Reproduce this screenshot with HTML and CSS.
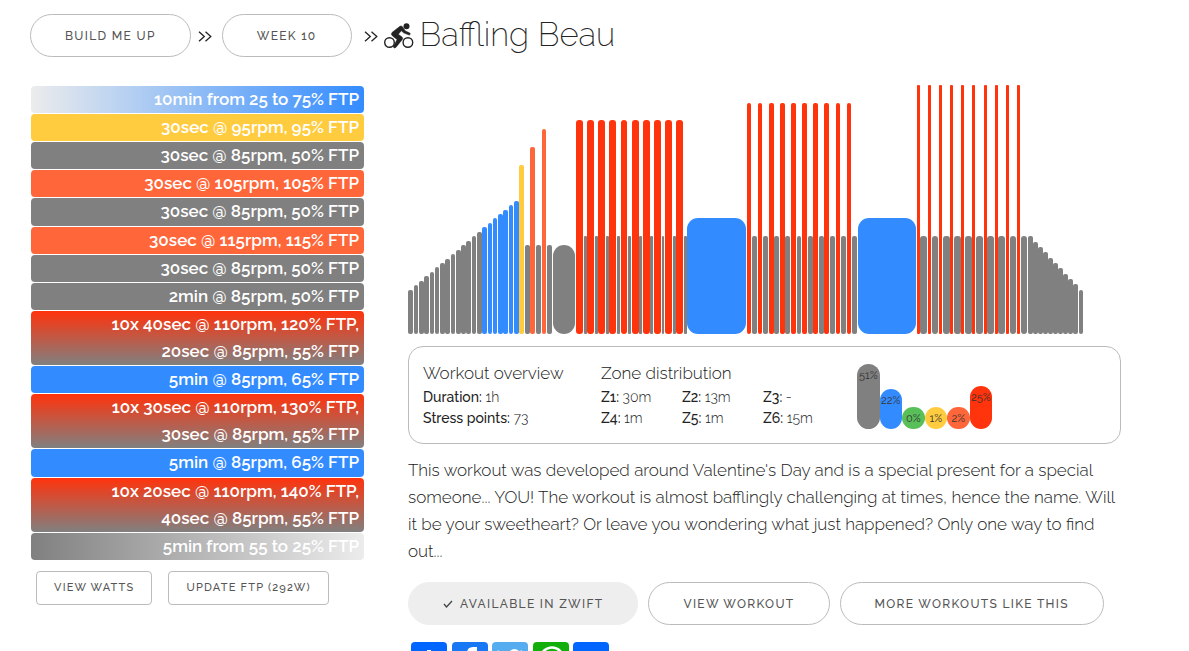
FILE: index.html
```html
<!DOCTYPE html>
<html lang="en">
<head>
<meta charset="utf-8">
<title>Baffling Beau</title>
<link rel="stylesheet" href="styles.css">
</head>
<body>
<header class="crumbs">
  <a class="pill" href="#">BUILD ME UP</a>
  <svg class="chevrons" viewBox="0 0 14 11" aria-hidden="true"><path d="M1 .7l5.300 4.800L1 10.300M7.500 .7l5.300 4.800-5.300 4.800"/></svg>
  <a class="pill" href="#">WEEK 10</a>
  <svg class="chevrons chevrons-last" viewBox="0 0 14 11" aria-hidden="true"><path d="M1 .7l5.300 4.800L1 10.300M7.500 .7l5.300 4.800-5.300 4.800"/></svg>
  <svg class="bike" viewBox="0 0 30 26" aria-hidden="true">
    <circle class="wheel" cx="5.500" cy="19.500" r="4.800"/><circle class="wheel" cx="23.900" cy="19.500" r="4.800"/>
    <circle cx="22.500" cy="3.200" r="3"/>
    <path class="rider" d="M8 9.500L16 3.300q1.500-.8 2.600.6l2.700 4 4.500 2.200q1.300 1.200-.5 2l-5.700-2.300-2.300-2.100-3 3.600 3.700 2.700q1.200 1.200.3 2.500l-6.500 8q-1.500 1-2.500-.5l3.800-7.500-4.600-3.600q-2-1.500-.5-3.400z"/>
  </svg>
  <h1 class="title">Baffling Beau</h1>
</header>
<main class="layout">
  <section class="plan">
    <ol class="steps">
      <li class="step warmup">10min from 25 to 75% FTP</li>
      <li class="step z4">30sec @ 95rpm, 95% FTP</li>
      <li class="step z1">30sec @ 85rpm, 50% FTP</li>
      <li class="step z5">30sec @ 105rpm, 105% FTP</li>
      <li class="step z1">30sec @ 85rpm, 50% FTP</li>
      <li class="step z5">30sec @ 115rpm, 115% FTP</li>
      <li class="step z1">30sec @ 85rpm, 50% FTP</li>
      <li class="step z1">2min @ 85rpm, 50% FTP</li>
      <li class="step interval">10x 40sec @ 110rpm, 120% FTP,<br>20sec @ 85rpm, 55% FTP</li>
      <li class="step z2">5min @ 85rpm, 65% FTP</li>
      <li class="step interval">10x 30sec @ 110rpm, 130% FTP,<br>30sec @ 85rpm, 55% FTP</li>
      <li class="step z2">5min @ 85rpm, 65% FTP</li>
      <li class="step interval">10x 20sec @ 110rpm, 140% FTP,<br>40sec @ 85rpm, 55% FTP</li>
      <li class="step cooldown">5min from 55 to 25% FTP</li>
    </ol>
    <div class="plan-actions">
      <button class="small-button" type="button">VIEW WATTS</button>
      <button class="small-button" type="button">UPDATE FTP (292W)</button>
    </div>
  </section>
  <section class="detail">
    <svg class="chart" id="chart" viewBox="0 0 713 249" role="img" aria-label="Workout profile"></svg>
    <div class="overview">
      <div class="summary">
        <h2>Workout overview</h2>
        <p><b>Duration:</b> 1h</p>
        <p><b>Stress points:</b> 73</p>
      </div>
      <div class="zones">
        <h2>Zone distribution</h2>
        <div class="zone-grid">
          <p><b>Z1:</b> 30m</p><p><b>Z2:</b> 13m</p><p><b>Z3:</b> -</p>
          <p><b>Z4:</b> 1m</p><p><b>Z5:</b> 1m</p><p><b>Z6:</b> 15m</p>
        </div>
      </div>
      <div class="distribution">
        <span class="share z1" style="height:65px">51%</span>
        <span class="share z2" style="height:40px">22%</span>
        <span class="share z3" style="height:22px">0%</span>
        <span class="share z4" style="height:22px">1%</span>
        <span class="share z5" style="height:22px">2%</span>
        <span class="share z6" style="height:43px">25%</span>
      </div>
    </div>
    <p class="description">This workout was developed around Valentine's Day and is a special present for a special someone... YOU! The workout is almost bafflingly challenging at times, hence the name. Will it be your sweetheart? Or leave you wondering what just happened? Only one way to find out...</p>
    <div class="actions">
      <button class="pill available" type="button"><svg class="check" viewBox="0 0 10 8" aria-hidden="true"><path d="M1 4l2.500 3L9 1"/></svg>AVAILABLE IN ZWIFT</button>
      <button class="pill" type="button">VIEW WORKOUT</button>
      <button class="pill" type="button">MORE WORKOUTS LIKE THIS</button>
    </div>
    <nav class="social" aria-label="Share">
      <a class="share-link share-blue" href="#" aria-label="Share"><svg viewBox="0 0 36 36"><path d="M16 8h4v8h8v4h-8v8h-4v-8H8v-4h8z"/></svg></a>
      <a class="share-link facebook" href="#" aria-label="Facebook"><svg viewBox="0 0 36 36"><path d="M15 31V19h-4v-5h4v-3q0-6 6-6h4v5h-3q-2 0-2 2v2h5l-1 5h-4v12z"/></svg></a>
      <a class="share-link twitter" href="#" aria-label="Twitter"><svg viewBox="0 0 36 36"><path d="M31 10q-1 1-3 1 2-1 2-3-1 1-3 1-2-2-5-2-6 1-5 7-6 0-11-6-2 5 2 8-1 0-2-1 0 4 4 6h-2q1 3 5 4-3 2-7 2 10 6 18 0 5-4 5-13z"/></svg></a>
      <a class="share-link whatsapp" href="#" aria-label="WhatsApp"><svg viewBox="0 0 36 36"><path class="ring" d="M7 29l2-6a11.500 11.500 0 1 1 4 4z"/><path d="M14 11q-4 4 2 10t9 1l-4-3-2 2-5-5 2-2z"/></svg></a>
      <a class="share-link share-blue" href="#" aria-label="Email"><svg viewBox="0 0 36 36"><path d="M7 12h22v13H7z"/></svg></a>
    </nav>
  </section>
</main>
<script src="chart.js"></script>
</body>
</html>
```
FILE: chart.js
```js
// Each bar is [x, width, height, zone].
const bars = [];
function run(xs, widths, heights, zone) {
  xs.forEach((x, i) => bars.push([x, widths[i] ?? widths[0], heights[i] ?? heights[0], zone]));
}
run([0,6,11,16,22,27,32,37,43,48,53,58,64,69], [5,4,5,5,4,4,5,5,4,5,5,5,4,5],
    [44,49,53,58,62,67,71,75,80,84,89,93,98,102], "z1");
run([74,80,85,90,95,101,106], [5,4,4,5,5,4,5], [107,111,116,120,124,129,133], "z2");
bars.push([111,5,169,"z4"], [117,5,89,"z1"], [122,5,187,"z5"], [128,5,89,"z1"],
          [134,4,205,"z5"], [139,5,89,"z1"], [145,22,89,"z1"]);
run([176,187,198,209,220,231,242,254,265,276], [3,3,3,3,3,3,3,2,3,3], [98], "z1");
run([168,179,190,201,213,224,235,246,257,268], [7,7,7,7,6,7,7,7,7,7], [214], "z6");
bars.push([279,59,116,"z2"]);
run([344,355,366,377,389,400,411,422,433,444], [5,5,5,5,4,5,5,5,5,5], [98], "z1");
run([339,350,361,372,383,394,405,416,428,439], [4,4,5,5,5,5,5,5,4,4], [231], "z6");
bars.push([450,58,116,"z2"]);
run([512,524,535,546,557,568,579,590,602,613], [7,6,7,7,7,7,7,7,6,6], [98], "z1");
run([509,520,531,542,553,564,576,587,598,609], [3], [249], "z6");
run([620,625,630,635,640,645,650,655,660,665,671], [5,5,5,5,5,5,5,5,5,5,4],
    [98,92,87,82,76,71,66,60,55,50,44], "z1");

function cornerRadius(width) {
  if (width > 8) return 11;
  if (width > 5) return 3;
  return width > 3 ? 2 : 1;
}

const chart = document.getElementById("chart");
for (const [x, width, height, zone] of bars) {
  const rect = document.createElementNS("http://www.w3.org/2000/svg", "rect");
  const attributes = { x, y: 249 - height, width, height, rx: cornerRadius(width), class: zone };
  for (const name in attributes) rect.setAttribute(name, attributes[name]);
  chart.append(rect);
}
```
FILE: styles.css
```css
* { box-sizing: border-box; }
body {
  margin: 0;
  padding: 14px 30px 0;
  overflow: hidden;
  background: #fff;
  color: #222;
  font-family: Raleway, Lato, sans-serif;
  font-size: 17px;
  line-height: 27px;
}
h1, h2, p, ol { margin: 0; padding: 0; font-weight: 300; }
.crumbs { display: flex; align-items: center; height: 43px; }
.pill {
  display: inline-flex;
  align-items: center;
  justify-content: center;
  height: 43px;
  padding: 0 34px;
  border: 1px solid #bbb;
  border-radius: 22px;
  background: #fff;
  color: #555;
  font: 500 12px/16px Raleway, Lato, sans-serif;
  letter-spacing: 0.11em;
  text-decoration: none;
  white-space: nowrap;
}
.chevrons { width: 14px; height: 11px; margin: 2px 10px 0 7px; fill: none; stroke: #222; stroke-width: 1.3; }
.chevrons-last { margin: 2px 6px 0 12px; }
.bike { width: 30px; height: 26px; fill: #222; }
.wheel { fill: none; stroke: #222; stroke-width: 1.4; }
.rider { stroke: #222; stroke-width: 0.6; }
.title { margin-left: 6px; font-size: 33px; font-weight: 200; line-height: 40px; padding-bottom: 2px; }
.layout { display: grid; grid-template-columns: 334px minmax(0, 713px); column-gap: 44px; margin-top: 28px; }
.steps { display: flex; flex-direction: column; gap: 1px; list-style: none; margin: 1px 0 0 1px; }
.step { padding-right: 5px; border-radius: 4px; color: #fff; font-weight: 600; line-height: 1.595; text-align: right; white-space: nowrap; }
.z1 { background: #808080; fill: #808080; }
.z2 { background: #338cff; fill: #338cff; }
.z3 { background: #59bf59; fill: #59bf59; }
.z4 { background: #ffcc3f; fill: #ffcc3f; }
.z5 { background: #ff6639; fill: #ff6639; }
.z6 { background: #ff330c; fill: #ff330c; }
.warmup { background: linear-gradient(to right, #ececec, #338cff); }
.cooldown { background: linear-gradient(to right, #808080, #ececec); }
.interval { background: linear-gradient(#ff330c, #808080); }
.plan-actions { display: flex; gap: 16px; margin: 11px 0 0 6px; }
.small-button {
  height: 34px;
  padding: 0 17px;
  border: 1px solid #bbb;
  border-radius: 4px;
  background: #fff;
  color: #555;
  font: 500 11px/16px Raleway, Lato, sans-serif;
  letter-spacing: 0.11em;
  white-space: nowrap;
}
.chart { display: block; width: 100%; }
.overview {
  display: grid;
  grid-template-columns: 178px 256px 1fr;
  margin-top: 12px;
  padding: 16px 14px 14px;
  border: 1px solid #bbb;
  border-radius: 15px;
  font-size: 14px;
  line-height: 21px;
}
.overview h2 { font-size: 17px; line-height: 21px; margin-bottom: 3px; }
.overview b { font-weight: 500; }
.zone-grid { display: grid; grid-template-columns: 81px 81px 1fr; }
.distribution { display: flex; align-items: flex-end; width: 135px; height: 66px; }
.share { flex: 1 1 0; min-width: 0; padding-top: 1px; border-radius: 12px; color: #333; font-size: 11px; line-height: 22px; text-align: center; }
.description { margin-top: 13px; }
.actions { display: flex; gap: 10px; margin-top: 17px; }
.available { background: #eee; border-color: #eee; }
.check { width: 10px; height: 8px; margin-right: 7px; fill: none; stroke: #444; stroke-width: 1.3; }
.social { display: flex; justify-content: space-between; width: 198px; margin: 17px 0 0 3px; }
.share-link { width: 36px; height: 36px; border-radius: 4px; }
.share-link svg { display: block; fill: #fff; }
.share-blue { background: #0166ff; }
.facebook { background: #1877f2; }
.twitter { background: #55acee; }
.whatsapp { background: #12af0a; }
.ring { fill: none; stroke: #fff; stroke-width: 2.5; }
```
